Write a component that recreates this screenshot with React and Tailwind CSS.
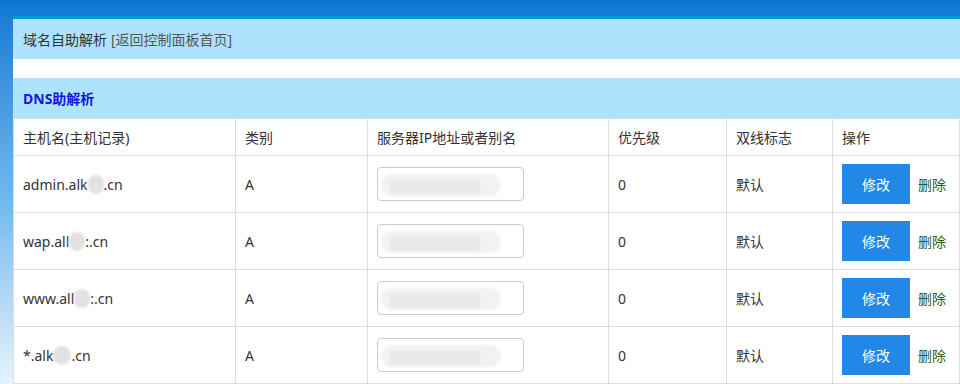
import React from "react";

const rows = [
  { pre: "admin.alk", post: ".cn", blurW: 16 },
  { pre: "wap.all", post: ":.cn", blurW: 16 },
  { pre: "www.all", post: ":.cn", blurW: 16 },
  { pre: "*.alk", post: ".cn", blurW: 18 },
];

const cell = "border-r border-b border-[#dddddd] flex items-center pl-[9px]";

function Smudge({ w }) {
  return (
    <span
      className="inline-block h-[19px] rounded-full bg-[#e2e2e2] align-middle blur-[1px]"
      style={{ width: w }}
    />
  );
}

function FakeInput() {
  return (
    <div className="relative w-[147px] h-[34px] rounded-[4px] border border-[#cccccc] bg-white overflow-hidden">
      <div className="absolute left-[3px] top-[6px] w-[120px] h-[22px] rounded-full bg-[#f2f2f2] blur-[1px]" />
      <div className="absolute left-[12px] top-[12px] w-[90px] h-[14px] bg-[#e8e8e8] blur-[1px]" />
    </div>
  );
}

export default function App() {
  return (
    <div
      className="w-[960px] h-[384px] overflow-hidden pt-[16px] pl-[13px] bg-gradient-to-b from-[#0a78d2] via-[#6cb6ec] to-[#e6f3fc]"
      style={{ fontFamily: '"Noto Sans", "Noto Sans CJK SC", sans-serif' }}
    >
      <div className="relative bg-white border-t-[3px] border-[#0096e0] h-[400px]">
        <div className="h-[40px] bg-[#ade3fd] flex items-center pl-[10px] text-[14px] text-[#333]">
          域名自助解析 <span className="ml-[4px] text-[#555]">[返回控制面板首页]</span>
        </div>
        <div className="h-[19px] bg-white" />
        <div className="h-[40px] bg-[#ade3fd] flex items-center pl-[10px] text-[14px] font-bold text-[#1414e6]">
          DNS助解析
        </div>
        <div className="grid grid-cols-[222px_132px_241px_118px_106px_1fr] border-t border-l border-[#dddddd] text-[#333] text-[14px]">
          <div className={`${cell} h-[37px]`}>主机名(主机记录)</div>
          <div className={`${cell} h-[37px]`}>类别</div>
          <div className={`${cell} h-[37px]`}>服务器IP地址或者别名</div>
          <div className={`${cell} h-[37px]`}>优先级</div>
          <div className={`${cell} h-[37px]`}>双线标志</div>
          <div className={`${cell} h-[37px]`}>操作</div>
          {rows.map((r, i) => (
            <React.Fragment key={i}>
              <div className={`${cell} h-[57px]`}>
                <span>{r.pre}</span>
                <Smudge w={r.blurW} />
                <span>{r.post}</span>
              </div>
              <div className={`${cell} h-[57px]`}>A</div>
              <div className={`${cell} h-[57px]`}>
                <FakeInput />
              </div>
              <div className={`${cell} h-[57px]`}>0</div>
              <div className={`${cell} h-[57px]`}>默认</div>
              <div className={`${cell} h-[57px] pl-[8px] gap-[8px]`}>
                <div className="w-[68px] h-[40px] bg-[#2188e8] text-white flex items-center justify-center">
                  修改
                </div>
                <span className="text-[#2d5a22]">删除</span>
              </div>
            </React.Fragment>
          ))}
        </div>
      </div>
    </div>
  );
}
